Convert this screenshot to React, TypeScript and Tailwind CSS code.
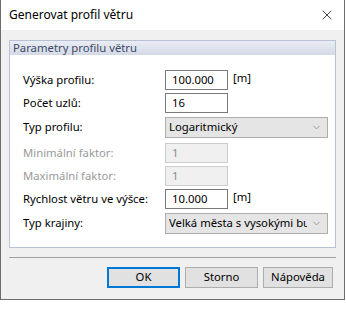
import { ChevronDown, X } from "lucide-react";

const font = { fontFamily: '"Segoe UI", "Noto Sans", sans-serif' };

function Field({
  label,
  value,
  unit,
  disabled,
  mt,
}: {
  label: string;
  value: string;
  unit?: boolean;
  disabled?: boolean;
  mt: string;
}) {
  return (
    <div className={`flex h-[20px] items-center ${mt}`}>
      <span
        className={`w-[142px] shrink-0 ${disabled ? "text-[#9a9a9a]" : "text-black"}`}
      >
        {label}
      </span>
      <div
        className={`flex h-[20px] w-[63px] items-center border px-[6px] ${
          disabled
            ? "border-[#cccccc] bg-[#f0f0f0] text-[#8c8c8c]"
            : "border-[#7a7a7a] bg-white text-black"
        }`}
      >
        {value}
      </div>
      {unit && <span className="-mt-[3px] ml-[5px]">[m]</span>}
    </div>
  );
}

function Select({ label, value, mt }: { label: string; value: string; mt: string }) {
  return (
    <div className={`flex h-[21px] items-center ${mt}`}>
      <span className="w-[142px] shrink-0">{label}</span>
      <div className="flex h-[21px] w-[163px] items-center overflow-hidden border border-[#adadad] bg-[#e5e5e5] pl-[3px] pr-[5px]">
        <span className="min-w-0 flex-1 overflow-hidden whitespace-nowrap">{value}</span>
        <ChevronDown size={11} strokeWidth={1.2} className="ml-[4px] shrink-0 text-[#606060]" />
      </div>
    </div>
  );
}

export default function App() {
  return (
    <div className="h-[325px] w-[346px] bg-white text-[11.3px] text-black" style={font}>
      <div className="h-[300px] w-[345px] border-x border-b border-[#6d6d6d] bg-[#f0f0f0]">
        <div className="flex h-[30px] items-center justify-between bg-white pl-[8px] pr-[9px]">
          <span className="text-[12px]">Generovat profil větru</span>
          <X size={16} strokeWidth={1.1} className="text-black" />
        </div>

        <div className="px-[8px] pt-[10px]">
          <div className="h-[208px] border border-[#b9c1d4] bg-white">
            <div className="flex h-[14px] items-center bg-gradient-to-b from-[#eaedf4] to-[#d3d9e6] pl-[3px] text-[11.3px] leading-none text-[#3e4a66]">
              Parametry profilu větru
            </div>
            <div className="pl-[13px] pt-[15px]">
              <Field label="Výška profilu:" value="100.000" unit mt="" />
              <Field label="Počet uzlů:" value="16" mt="mt-[3px]" />
              <Select label="Typ profilu:" value="Logaritmický" mt="mt-[4px]" />
              <Field label="Minimální faktor:" value="1" disabled mt="mt-[5px]" />
              <Field label="Maximální faktor:" value="1" disabled mt="mt-[3px]" />
              <Field label="Rychlost větru ve výšce:" value="10.000" unit mt="mt-[3px]" />
              <Select label="Typ krajiny:" value="Velká města s vysokými budovami" mt="mt-[4px]" />
            </div>
          </div>

          <div className="mt-[9px] h-[2px] border-t border-[#a0a0a0] border-b-white" />

          <div className="mt-[8px] flex justify-end gap-[5px] pr-[3px]">
            <button className="h-[21px] w-[73px] border-2 border-[#0078d7] bg-[#e1e1e1]">OK</button>
            <button className="h-[21px] w-[73px] border border-[#adadad] bg-[#e1e1e1]">Storno</button>
            <button className="h-[21px] w-[70px] border border-[#adadad] bg-[#e1e1e1]">Nápověda</button>
          </div>
        </div>
      </div>
    </div>
  );
}
